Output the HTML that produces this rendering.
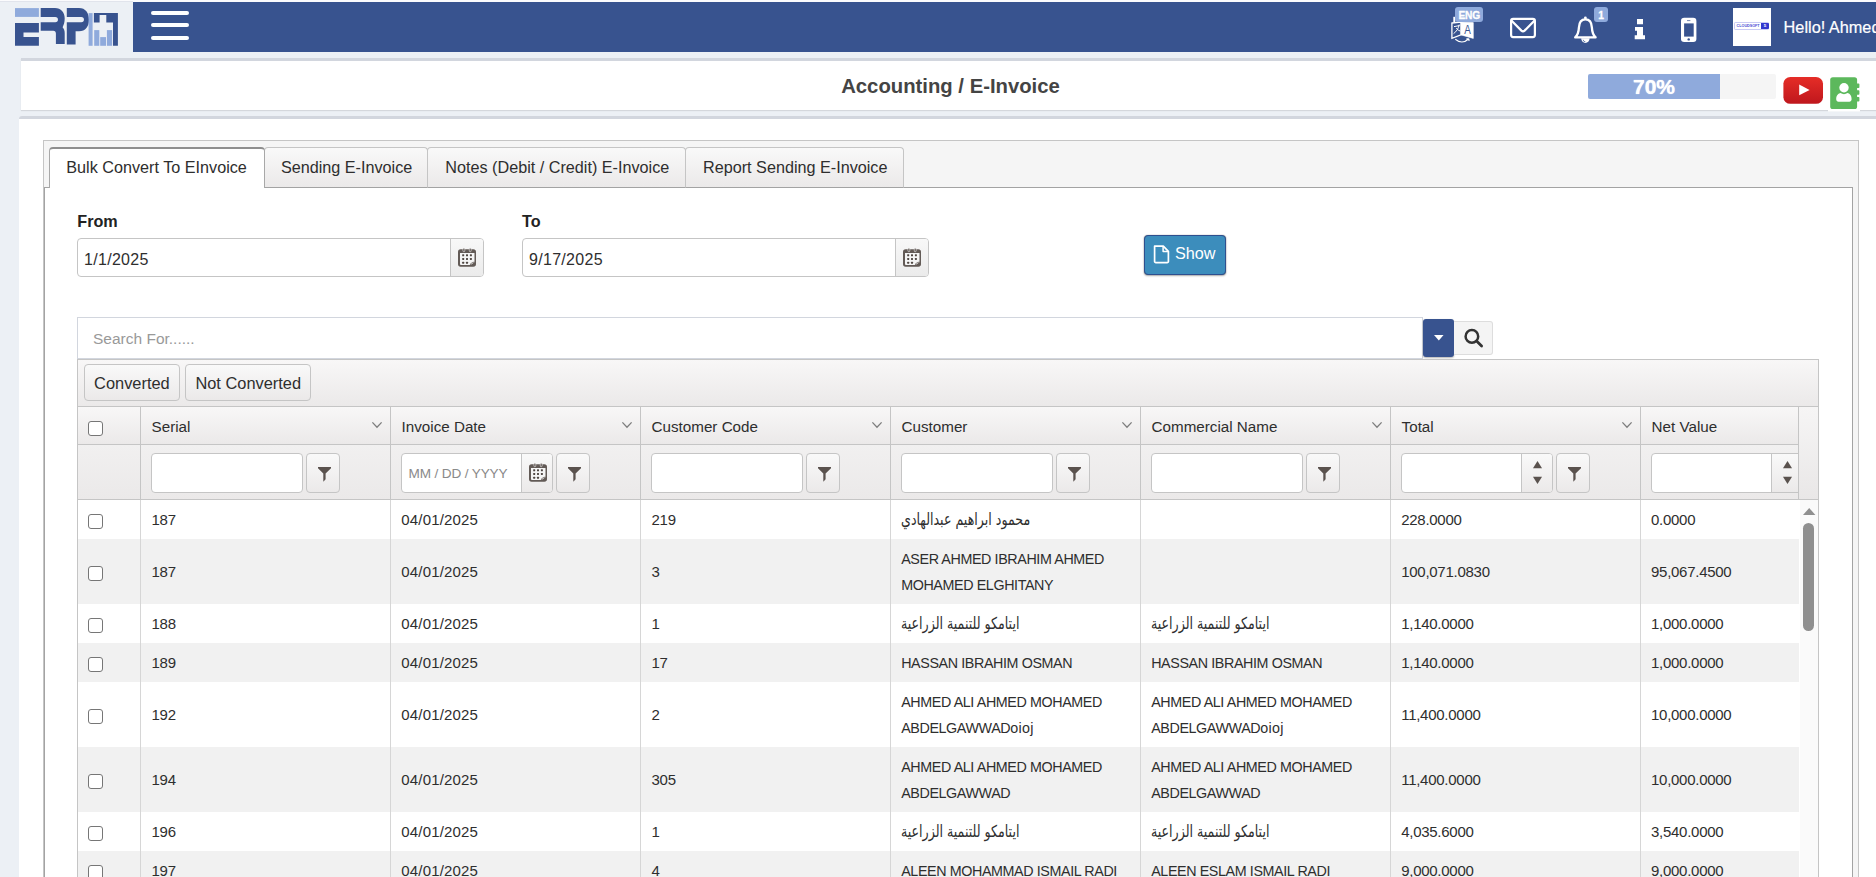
<!DOCTYPE html>
<html lang="en"><head><meta charset="utf-8"><title>Accounting / E-Invoice</title>
<style>
*{box-sizing:border-box}
html,body{margin:0;padding:0}
body{width:1876px;height:877px;overflow:hidden;background:#ecf0f5;font-family:"Liberation Sans","DejaVu Sans",sans-serif;color:#2e2e2e;position:relative;font-size:15px}
.a{position:absolute}
.t{position:absolute;white-space:nowrap;line-height:20px}
svg{position:absolute;overflow:visible}
/* navbar */
#topline{left:0;top:0;width:1876px;height:2px;background:#fbfbfd}
#topline2{left:0;top:1.2px;width:132.5px;height:.9px;background:#e1e4ec}
#nav{left:133px;top:2px;width:1743px;height:50px;background:#38538f}
.bar{left:151px;width:38px;height:4.3px;border-radius:2.2px;background:#fff}
.badge{background:#8faadc;color:#fff;font-weight:bold;border-radius:3px;text-align:center;height:15px;top:7px;font-size:10.2px;line-height:18.6px;letter-spacing:-.2px;-webkit-text-stroke:.3px #fff}
#hello{left:1783.6px;top:17.4px;color:#fff;font-size:16.3px;line-height:20px;-webkit-text-stroke:.2px #fff}
#avatar{left:1733px;top:8px;width:38px;height:38px;background:#fff}
/* boxes */
#titlebox{left:21px;top:58px;width:1860px;height:52px;background:#fff;border-top:3px solid #d2d6de;box-shadow:0 1px 1px rgba(0,0,0,.1);border-radius:0}
#title{left:841.2px;top:72.5px;font-weight:bold;font-size:20.3px;line-height:26px;color:#444}
#prog{left:1588px;top:74px;width:188px;height:25px;background:#f5f5f5;border-radius:2px;overflow:hidden}
#progfill{left:0;top:0;width:132px;height:25px;background:#8faadc}
#progtxt{left:1588px;top:74px;width:132px;text-align:center;color:#fff;font-weight:bold;font-size:21px;line-height:25px;text-shadow:0 0 1px #fff}
#mainbox{left:19px;top:116px;width:1870px;height:800px;background:#fff;border-top:3px solid #d2d6de;border-radius:3px}
/* tabs */
#tabwrap{left:43px;top:140px;width:1816px;height:760px;background:#f5f5f5;border:1px solid #c5c5c5}
#tabpanel{left:44px;top:187px;width:1809px;height:720px;background:#fff;border:1px solid #a3a3a3}
.tab{top:147px;height:41px;border:1px solid #c5c5c5;border-bottom-color:#a3a3a3;border-radius:4px 4px 0 0;background:linear-gradient(#f9f9f9,#ebe9e9);font-size:16.2px}
.tab span{position:absolute;left:16px;top:9px;line-height:20px;white-space:nowrap;color:#2e2e2e}
.tab.on{background:#fff;border-color:#a8a8a8;border-top:2px solid #8e8e8e;border-bottom:0;height:41px;z-index:2}
/* form */
.lbl{font-weight:bold;font-size:16.2px;color:#222}
.inp{height:39px;border:1px solid #c5c5c5;border-radius:4px;background:#fff;overflow:hidden}
.inp .btn{position:absolute;right:0;top:0;bottom:0;width:33px;border-left:1px solid #c5c5c5;background:linear-gradient(#f8f8f8,#ebebeb)}
.inp .v{position:absolute;left:6px;top:10.5px;font-size:16px;letter-spacing:.3px;line-height:20px;color:#2e2e2e}
#show{left:1144px;top:235px;width:82px;height:40px;background:#3c8dbc;border:1px solid #2e4f8f;border-radius:4px;box-shadow:0 0 1px rgba(0,0,0,.5),0 1px 2px rgba(0,0,0,.3)}
#show span{position:absolute;left:30px;top:7.2px;color:#fff;font-size:16.2px;line-height:20px}
/* search */
#search{left:77px;top:317px;width:1346px;height:42px;background:#fff;border:1px solid #d2d6de}
#search span{position:absolute;left:15px;top:10.8px;font-size:15.5px;line-height:20px;color:#999}
#dd{left:1423.2px;top:318.6px;width:31.2px;height:38.4px;background:#38538f;border-radius:3px;box-shadow:0 1px 2px rgba(0,0,0,.3)}
#sbtn{left:1454.4px;top:321px;width:38.3px;height:34px;background:#f4f4f4;border:1px solid #ddd;border-left:0;border-radius:0 3px 3px 0}
/* toolbar */
#toolbar{left:77px;top:359px;width:1742px;height:48px;border:1px solid #c5c5c5;background:linear-gradient(#f8f7f7,#ebe9e9)}
.kbtn{border:1px solid #c5c5c5;border-radius:4px;background:linear-gradient(#f9f9f9,#ebe9e9);font-size:16.4px}
.kbtn span{position:absolute;white-space:nowrap;line-height:20px}
/* grid */
#grid{left:77px;top:406px;width:1742px;height:500px;border:1px solid #c5c5c5;background:#fff}
#hdr{left:78px;top:407px;width:1740px;height:37px;background:linear-gradient(#f8f7f7,#ebe9e9)}
#flt{left:78px;top:445px;width:1740px;height:54px;background:linear-gradient(#f1f0f0,#ebe9e9)}
.hl{left:78px;width:1740px;height:1px;background:#c5c5c5}
.vl{top:407px;width:1px;height:93px;background:#c5c5c5}
.vb{top:500px;width:1px;height:400px;background:#d6d6d6}
.th{top:416.5px;font-size:15.2px;line-height:20px;color:#2e2e2e}
.row{left:78px;width:1721px}
.alt{background:#f1f1f1}
.c{position:absolute;white-space:nowrap;font-size:15px;line-height:26px;color:#2e2e2e}
.c.up{font-size:14.3px;letter-spacing:-.39px}
.c.n{letter-spacing:-.25px}
.c.num{letter-spacing:-.27px;margin-left:-.5px}
.c.dt{letter-spacing:.17px}
.c.ar{font-family:"DejaVu Sans Condensed","DejaVu Sans",sans-serif;font-size:16.5px;transform:scaleX(.85);transform-origin:0 50%}
.cb{width:15px;height:15px;border:1px solid #767676;border-radius:3px;background:#fff;left:88px}
.fin{top:453px;height:40px;border:1px solid #c5c5c5;border-radius:4px;background:#fff;overflow:hidden}
.fbtn{top:453px;width:34px;height:40px;border:1px solid #c5c5c5;border-radius:4px;background:linear-gradient(#f9f9f9,#ebe9e9)}
.spin{position:absolute;right:0;top:0;bottom:0;width:31px;border-left:1px solid #c5c5c5;background:linear-gradient(#f9f9f9,#ebe9e9)}
</style></head><body>
<div class="a" id="topline"></div><div class="a" id="topline2"></div>
<svg style="left:0;top:0" width="133" height="52" viewBox="0 0 133 52">
 <rect x="15" y="8.1" width="23.9" height="8.8" fill="#8faadc"/>
 <path d="M15 23.1H38.9V32.6H23.5V37.1H38.9V45.8H15Z" fill="#38538f"/>
 <path d="M40.7 8.1H55C61 8.1 64.7 12.5 64.7 18.5C64.7 22.5 63.6 25.3 62.6 27.2C63.9 28.8 64.7 30.5 64.7 33V44.1H55.9V33.5C55.9 31.8 55 30.7 53.3 30.7H40.7V22.2H55.3A2.65 2.65 0 0 0 55.3 16.9H40.7Z" fill="#38538f"/>
 <path d="M66.8 8.1H79C85.5 8.1 89 13 89 19.7C89 26.4 85.5 31.3 79 31.3H75.6V44.4H66.8V22.2H81.3A2.65 2.65 0 0 0 81.3 16.9H66.8Z" fill="#38538f"/>
 <rect x="88.6" y="13.1" width="4" height="32.7" fill="#8faadc"/>
 <rect x="94.2" y="30.1" width="5.1" height="15.7" fill="#8faadc"/>
 <rect x="100.2" y="37.1" width="5.8" height="8.7" fill="#8faadc"/>
 <rect x="106.9" y="30.1" width="5.2" height="15.7" fill="#8faadc"/>
 <path d="M93.9 13H117.9V45.8H113V22.5H106.3V14.9H99.6V22.5H93.9Z" fill="#38538f"/>
</svg>
<div class="a" id="nav"></div>
<div class="a bar" style="top:11px"></div>
<div class="a bar" style="top:23px"></div>
<div class="a bar" style="top:35.8px"></div>
<!-- nav icons -->
<svg style="left:0;top:0" width="1876" height="52" viewBox="0 0 1876 52" fill="none" stroke="#fff">
 <!-- language -->
 <path d="M1454.3 16.8V22.4" stroke-width="2"/>
 <path d="M1451.9 23L1461 22.2V34.9L1451.9 38.4Z" stroke-width="1.3"/>
 <path d="M1454 26.6L1459.6 25.6M1459.2 24.6C1458.6 28.4 1456.6 31.4 1453.6 33.6M1456.2 28.2C1457.4 29.6 1458.8 30.6 1460.4 31.2" stroke-width="1"/>
 <path d="M1461 21.9L1473.3 22.6V38.4L1461 34.9Z" fill="#fff" stroke-width=".6"/>
 <path d="M1455.3 39.3C1459.6 42.8 1464.6 42.6 1468.6 39M1468.9 38.7L1466.4 38.9M1468.9 38.7L1469 41.1" stroke-width="1.1"/>
 <!-- envelope -->
 <rect x="1511.1" y="18.9" width="23.8" height="18.2" rx="2" stroke-width="2.2"/>
 <path d="M1511.4 20.4L1521.4 30.6Q1523 32 1524.6 30.6L1534.6 20.4" stroke-width="2.2"/>
 <!-- bell -->
 <path d="M1585.4 19.4C1580.4 19.4 1579.1 23.4 1578.9 27.6C1578.7 32.4 1577.6 35 1575.2 37.4H1595.6C1593.2 35 1592.1 32.4 1591.9 27.6C1591.7 23.4 1590.4 19.4 1585.4 19.4Z" stroke-width="2.3" stroke-linejoin="round"/>
 <circle cx="1585.4" cy="17.9" r="1.4" fill="#fff" stroke="none"/>
 <path d="M1581.2 38.2A4.2 4.8 0 0 0 1589.6 38.2Z" fill="#fff" stroke="none"/>
 <path d="M1583.2 39.8A2.2 2.2 0 0 0 1585.4 41.8" stroke="#38538f" stroke-width=".7"/>
 <!-- info -->
 <path d="M1637 19.1H1643V24.3H1637ZM1635 27H1643V35.2H1645V39.3H1634.7V35.2H1637V30.7H1635Z" fill="#fff" stroke="none"/>
 <!-- mobile -->
 <rect x="1681" y="17.7" width="15.4" height="24.3" rx="3.2" fill="#fff" stroke="none"/>
 <rect x="1684.1" y="23.4" width="9.6" height="13.2" fill="#38538f" stroke="none"/>
 <circle cx="1688.7" cy="39.4" r="1.2" fill="#38538f" stroke="none"/>
 <path d="M1687 20.6H1690.4" stroke="#38538f" stroke-width=".7"/>
</svg>
<div class="a t" style="left:1463px;top:23.6px;width:9px;text-align:center;color:#38538f;font-size:12px;line-height:13px;transform:scaleX(.82)">A</div>
<div class="a badge" style="left:1455.4px;width:27.6px">ENG</div>
<div class="a badge" style="left:1593.8px;width:14.3px">1</div>
<div class="a" id="avatar">
 <div class="a" style="left:1.4px;top:14.2px;width:34.8px;height:7.4px;border:1px solid #c9cbf5;border-radius:1.2px"></div>
 <div class="a" style="left:28px;top:14.6px;width:7.9px;height:6.6px;background:#3238cf;border-radius:0 1px 1px 0"></div>
 <div class="t" style="left:3.6px;top:15.9px;font-size:3.7px;line-height:5px;font-weight:bold;color:#474cd4;letter-spacing:0">CLOUDSOFT</div>
 <div class="t" style="left:30.8px;top:15.2px;font-size:4.4px;line-height:5px;font-weight:bold;color:#fff">5</div>
</div>
<div class="a t" id="hello">Hello! Ahmed</div>
<!-- title box -->
<div class="a" id="titlebox"></div>
<div class="a t" id="title">Accounting / E-Invoice</div>
<div class="a" id="prog"><div class="a" id="progfill"></div></div>
<div class="a t" id="progtxt">70%</div>
<svg style="left:1783px;top:76px" width="80" height="38" viewBox="1783 76 80 38">
 <defs><linearGradient id="yt" x1="0" y1="0" x2="0" y2="1"><stop offset="0" stop-color="#e52d27"/><stop offset="1" stop-color="#bf171d"/></linearGradient></defs>
 <rect x="1783.4" y="77" width="39.6" height="26.8" rx="7" ry="6.5" fill="url(#yt)"/>
 <path d="M1799.2 84.5L1809.6 89.9L1799.2 95.3Z" fill="#fff"/>
 <rect x="1828" y="76" width="32" height="35.5" fill="#fff"/>
 <rect x="1830.2" y="77.2" width="26.9" height="31.8" rx="2.6" fill="#5cb85c"/>
 <path d="M1857 83.5h1.6a.8.8 0 0 1 .8.8v3a.8.8 0 0 1-.8.8h-1.6zM1857 90.2h1.6a.8.8 0 0 1 .8.8v3a.8.8 0 0 1-.8.8h-1.6zM1857 96.9h1.6a.8.8 0 0 1 .8.8v3a.8.8 0 0 1-.8.8h-1.6z" fill="#5cb85c"/>
 <circle cx="1844" cy="87.8" r="4.7" fill="#fff"/>
 <path d="M1836.2 99.3C1836.2 95.3 1838.6 93.3 1840.6 93.1C1842.4 94.6 1845.6 94.6 1847.4 93.1C1849.4 93.3 1851.6 95.3 1851.6 99.3C1851.6 100.9 1850.6 101.8 1849.4 101.8H1838.4C1837.2 101.8 1836.2 100.9 1836.2 99.3Z" fill="#fff"/>
</svg>
<div class="a" id="mainbox"></div>
<div class="a" id="tabwrap"></div>
<div class="a" id="tabpanel"></div>
<div class="a tab on" style="left:49px;width:216px"><span style="left:16.3px;top:8.3px">Bulk Convert To EInvoice</span></div>
<div class="a tab" style="left:264px;width:164px"><span style="left:15.9px">Sending E-Invoice</span></div>
<div class="a tab" style="left:427px;width:259px"><span style="left:17.3px">Notes (Debit / Credit) E-Invoice</span></div>
<div class="a tab" style="left:685px;width:219px"><span style="left:17px">Report Sending E-Invoice</span></div>
<!-- form -->
<div class="a t lbl" style="left:77.3px;top:211px">From</div>
<div class="a t lbl" style="left:522px;top:211px">To</div>
<div class="a inp" style="left:77px;top:238px;width:407px"><span class="v">1/1/2025</span><div class="btn">
<svg style="left:7px;top:9.2px" width="18" height="18.7" viewBox="0 0 18 18.7"><rect x="0" y="1.3" width="18" height="17.4" rx="2.6" fill="#625a56"/><path d="M2 4.9H16.5V14.3L12.5 16.9H2.9A.9 .9 0 0 1 2 16Z" fill="#f5f5f5"/><path d="M12.3 17C12.5 15.4 13.7 14.4 16.6 14.1" fill="none" stroke="#625a56" stroke-width=".8"/><rect x="4.9" y=".2" width="1.9" height="3.5" rx=".9" fill="#625a56" stroke="#efefef" stroke-width=".6"/><rect x="11.3" y=".2" width="1.9" height="3.5" rx=".9" fill="#625a56" stroke="#efefef" stroke-width=".6"/><g fill="#4e4642"><rect x="4.2" y="6.3" width="2" height="2" rx=".5"/><rect x="8" y="6.3" width="2" height="2" rx=".5"/><rect x="11.9" y="6.3" width="2" height="2" rx=".5"/><rect x="4.2" y="10" width="2" height="2" rx=".5"/><rect x="8" y="10" width="2" height="2" rx=".5"/><rect x="11.9" y="10" width="2" height="2" rx=".5"/><rect x="4.2" y="13.7" width="2" height="2" rx=".5"/><rect x="8" y="13.7" width="2" height="2" rx=".5"/></g></svg>
</div></div>
<div class="a inp" style="left:522px;top:238px;width:407px"><span class="v">9/17/2025</span><div class="btn">
<svg style="left:7px;top:9.2px" width="18" height="18.7" viewBox="0 0 18 18.7"><rect x="0" y="1.3" width="18" height="17.4" rx="2.6" fill="#625a56"/><path d="M2 4.9H16.5V14.3L12.5 16.9H2.9A.9 .9 0 0 1 2 16Z" fill="#f5f5f5"/><path d="M12.3 17C12.5 15.4 13.7 14.4 16.6 14.1" fill="none" stroke="#625a56" stroke-width=".8"/><rect x="4.9" y=".2" width="1.9" height="3.5" rx=".9" fill="#625a56" stroke="#efefef" stroke-width=".6"/><rect x="11.3" y=".2" width="1.9" height="3.5" rx=".9" fill="#625a56" stroke="#efefef" stroke-width=".6"/><g fill="#4e4642"><rect x="4.2" y="6.3" width="2" height="2" rx=".5"/><rect x="8" y="6.3" width="2" height="2" rx=".5"/><rect x="11.9" y="6.3" width="2" height="2" rx=".5"/><rect x="4.2" y="10" width="2" height="2" rx=".5"/><rect x="8" y="10" width="2" height="2" rx=".5"/><rect x="11.9" y="10" width="2" height="2" rx=".5"/><rect x="4.2" y="13.7" width="2" height="2" rx=".5"/><rect x="8" y="13.7" width="2" height="2" rx=".5"/></g></svg>
</div></div>
<div class="a" id="show">
<svg style="left:7.9px;top:9px" width="17" height="19" viewBox="0 0 17 19" fill="none" stroke="#fff" stroke-width="1.7" stroke-linejoin="round"><path d="M1.6 1.2H10.3L15.4 6.3V16.4A1.2 1.2 0 0 1 14.2 17.6H2.8A1.2 1.2 0 0 1 1.6 16.4Z"/><path d="M10.1 1.4V6.5H15.2" stroke-width="1.5"/></svg>
<span>Show</span></div>
<!-- search -->
<div class="a" id="search"><span>Search For......</span></div>
<div class="a" id="dd"><svg style="left:10.9px;top:16.1px" width="9.6" height="5.4" viewBox="0 0 9.6 5.4"><path d="M0 0H9.6L4.8 5.4Z" fill="#fff"/></svg></div>
<div class="a" id="sbtn"><svg style="left:8.4px;top:6.1px" width="20" height="20" viewBox="0 0 20 20" fill="none" stroke="#333" stroke-width="2.5"><circle cx="8.9" cy="8.4" r="6.3"/><path d="M13.6 13.1L18.6 18" stroke-linecap="round" stroke-width="2.8"/></svg></div>
<!-- toolbar -->
<div class="a" id="toolbar"></div>
<div class="a kbtn" style="left:84px;top:364px;width:96px;height:37px"><span style="left:9.1px;top:8.2px">Converted</span></div>
<div class="a kbtn" style="left:185px;top:364px;width:126px;height:37px"><span style="left:9.4px;top:8.2px">Not Converted</span></div>
<!-- grid -->
<div class="a" id="grid"></div>
<div class="a" id="hdr"></div>
<div class="a" id="flt"></div>
<div class="a hl" style="top:444px"></div>
<div class="a hl" style="top:499px"></div>
<div class="a row" style="top:500px;height:39px">
<div class="a cb" style="left:10px;top:14.0px"></div>
<span class="c n" style="left:73.5px;top:7.2px">187</span>
<span class="c dt" style="left:323.3px;top:7.2px">04/01/2025</span>
<span class="c n" style="left:573.5px;top:7.2px">219</span>
<span class="c ar" dir="rtl" style="left:823.2px;top:7.2px">محمود ابراهيم عبدالهادي</span>
<span class="c num" style="left:1323.7px;top:7.2px">228.0000</span>
<span class="c num" style="left:1573.5px;top:7.2px">0.0000</span>
</div>
<div class="a row alt" style="top:539px;height:65px">
<div class="a cb" style="left:10px;top:27.0px"></div>
<span class="c n" style="left:73.5px;top:20.2px">187</span>
<span class="c dt" style="left:323.3px;top:20.2px">04/01/2025</span>
<span class="c n" style="left:573.5px;top:20.2px">3</span>
<span class="c up" style="left:823.2px;top:7.2px">ASER AHMED IBRAHIM AHMED</span>
<span class="c up" style="left:823.2px;top:33.2px">MOHAMED ELGHITANY</span>
<span class="c num" style="left:1323.7px;top:20.2px">100,071.0830</span>
<span class="c num" style="left:1573.5px;top:20.2px">95,067.4500</span>
</div>
<div class="a row" style="top:604px;height:39px">
<div class="a cb" style="left:10px;top:14.0px"></div>
<span class="c n" style="left:73.5px;top:7.2px">188</span>
<span class="c dt" style="left:323.3px;top:7.2px">04/01/2025</span>
<span class="c n" style="left:573.5px;top:7.2px">1</span>
<span class="c ar" dir="rtl" style="left:823.2px;top:7.2px">ايتامكو للتنمية الزراعية</span>
<span class="c ar" dir="rtl" style="left:1073.2px;top:7.2px">ايتامكو للتنمية الزراعية</span>
<span class="c num" style="left:1323.7px;top:7.2px">1,140.0000</span>
<span class="c num" style="left:1573.5px;top:7.2px">1,000.0000</span>
</div>
<div class="a row alt" style="top:643px;height:39px">
<div class="a cb" style="left:10px;top:14.0px"></div>
<span class="c n" style="left:73.5px;top:7.2px">189</span>
<span class="c dt" style="left:323.3px;top:7.2px">04/01/2025</span>
<span class="c n" style="left:573.5px;top:7.2px">17</span>
<span class="c up" style="left:823.2px;top:7.2px">HASSAN IBRAHIM OSMAN</span>
<span class="c up" style="left:1073.2px;top:7.2px">HASSAN IBRAHIM OSMAN</span>
<span class="c num" style="left:1323.7px;top:7.2px">1,140.0000</span>
<span class="c num" style="left:1573.5px;top:7.2px">1,000.0000</span>
</div>
<div class="a row" style="top:682px;height:65px">
<div class="a cb" style="left:10px;top:27.0px"></div>
<span class="c n" style="left:73.5px;top:20.2px">192</span>
<span class="c dt" style="left:323.3px;top:20.2px">04/01/2025</span>
<span class="c n" style="left:573.5px;top:20.2px">2</span>
<span class="c up" style="left:823.2px;top:7.2px">AHMED ALI AHMED MOHAMED</span>
<span class="c up" style="left:823.2px;top:33.2px">ABDELGAWWAD<span style="letter-spacing:.35px">oioj</span></span>
<span class="c up" style="left:1073.2px;top:7.2px">AHMED ALI AHMED MOHAMED</span>
<span class="c up" style="left:1073.2px;top:33.2px">ABDELGAWWAD<span style="letter-spacing:.35px">oioj</span></span>
<span class="c num" style="left:1323.7px;top:20.2px">11,400.0000</span>
<span class="c num" style="left:1573.5px;top:20.2px">10,000.0000</span>
</div>
<div class="a row alt" style="top:747px;height:65px">
<div class="a cb" style="left:10px;top:27.0px"></div>
<span class="c n" style="left:73.5px;top:20.2px">194</span>
<span class="c dt" style="left:323.3px;top:20.2px">04/01/2025</span>
<span class="c n" style="left:573.5px;top:20.2px">305</span>
<span class="c up" style="left:823.2px;top:7.2px">AHMED ALI AHMED MOHAMED</span>
<span class="c up" style="left:823.2px;top:33.2px">ABDELGAWWAD</span>
<span class="c up" style="left:1073.2px;top:7.2px">AHMED ALI AHMED MOHAMED</span>
<span class="c up" style="left:1073.2px;top:33.2px">ABDELGAWWAD</span>
<span class="c num" style="left:1323.7px;top:20.2px">11,400.0000</span>
<span class="c num" style="left:1573.5px;top:20.2px">10,000.0000</span>
</div>
<div class="a row" style="top:812px;height:39px">
<div class="a cb" style="left:10px;top:14.0px"></div>
<span class="c n" style="left:73.5px;top:7.2px">196</span>
<span class="c dt" style="left:323.3px;top:7.2px">04/01/2025</span>
<span class="c n" style="left:573.5px;top:7.2px">1</span>
<span class="c ar" dir="rtl" style="left:823.2px;top:7.2px">ايتامكو للتنمية الزراعية</span>
<span class="c ar" dir="rtl" style="left:1073.2px;top:7.2px">ايتامكو للتنمية الزراعية</span>
<span class="c num" style="left:1323.7px;top:7.2px">4,035.6000</span>
<span class="c num" style="left:1573.5px;top:7.2px">3,540.0000</span>
</div>
<div class="a row alt" style="top:851px;height:39px">
<div class="a cb" style="left:10px;top:14.0px"></div>
<span class="c n" style="left:73.5px;top:7.2px">197</span>
<span class="c dt" style="left:323.3px;top:7.2px">04/01/2025</span>
<span class="c n" style="left:573.5px;top:7.2px">4</span>
<span class="c up" style="left:823.2px;top:7.2px">ALEEN MOHAMMAD ISMAIL RADI</span>
<span class="c up" style="left:1073.2px;top:7.2px">ALEEN ESLAM ISMAIL RADI</span>
<span class="c num" style="left:1323.7px;top:7.2px">9,000.0000</span>
<span class="c num" style="left:1573.5px;top:7.2px">9,000.0000</span>
</div>
<div class="a vl" style="left:140px"></div>
<div class="a vb" style="left:140px"></div>
<div class="a vl" style="left:390px"></div>
<div class="a vb" style="left:390px"></div>
<div class="a vl" style="left:640px"></div>
<div class="a vb" style="left:640px"></div>
<div class="a vl" style="left:890px"></div>
<div class="a vb" style="left:890px"></div>
<div class="a vl" style="left:1140px"></div>
<div class="a vb" style="left:1140px"></div>
<div class="a vl" style="left:1390px"></div>
<div class="a vb" style="left:1390px"></div>
<div class="a vl" style="left:1640px"></div>
<div class="a vb" style="left:1640px"></div>
<div class="a vl" style="left:1798px"></div>
<div class="a cb" style="top:421px"></div>
<div class="a t th" style="left:151.6px">Serial</div>
<svg style="left:372px;top:422px" width="10" height="6" viewBox="0 0 10 6"><path d="M.4 .4L5 5.2L9.6 .4" fill="none" stroke="#7d7d7d" stroke-width="1.3"/></svg>
<div class="a t th" style="left:401.6px">Invoice Date</div>
<svg style="left:622px;top:422px" width="10" height="6" viewBox="0 0 10 6"><path d="M.4 .4L5 5.2L9.6 .4" fill="none" stroke="#7d7d7d" stroke-width="1.3"/></svg>
<div class="a t th" style="left:651.6px">Customer Code</div>
<svg style="left:872px;top:422px" width="10" height="6" viewBox="0 0 10 6"><path d="M.4 .4L5 5.2L9.6 .4" fill="none" stroke="#7d7d7d" stroke-width="1.3"/></svg>
<div class="a t th" style="left:901.6px">Customer</div>
<svg style="left:1122px;top:422px" width="10" height="6" viewBox="0 0 10 6"><path d="M.4 .4L5 5.2L9.6 .4" fill="none" stroke="#7d7d7d" stroke-width="1.3"/></svg>
<div class="a t th" style="left:1151.6px">Commercial Name</div>
<svg style="left:1372px;top:422px" width="10" height="6" viewBox="0 0 10 6"><path d="M.4 .4L5 5.2L9.6 .4" fill="none" stroke="#7d7d7d" stroke-width="1.3"/></svg>
<div class="a t th" style="left:1401.6px">Total</div>
<svg style="left:1622px;top:422px" width="10" height="6" viewBox="0 0 10 6"><path d="M.4 .4L5 5.2L9.6 .4" fill="none" stroke="#7d7d7d" stroke-width="1.3"/></svg>
<div class="a t th" style="left:1651.6px">Net Value</div>
<div class="a fin" style="left:151px;width:152px"></div>
<div class="a fbtn" style="left:306px"><svg style="left:10.5px;top:13px" width="13" height="15" viewBox="0 0 13 15"><path d="M0 0H13V1.2L7.6 6.6V12.2L5.6 14.6H5.3V6.6L0 1.2Z" fill="#5a524e"/></svg></div>
<div class="a fin" style="left:401px;width:152px"><span class="t" style="left:6.6px;top:10.4px;font-size:13.6px;color:#8a8a8a;letter-spacing:-.15px">MM / DD / YYYY</span><div class="spin" style="width:31px"><svg style="left:6.5px;top:9.2px" width="18" height="18.7" viewBox="0 0 18 18.7"><rect x="0" y="1.3" width="18" height="17.4" rx="2.6" fill="#625a56"/><path d="M2 4.9H16.5V14.3L12.5 16.9H2.9A.9 .9 0 0 1 2 16Z" fill="#f5f5f5"/><path d="M12.3 17C12.5 15.4 13.7 14.4 16.6 14.1" fill="none" stroke="#625a56" stroke-width=".8"/><rect x="4.9" y=".2" width="1.9" height="3.5" rx=".9" fill="#625a56" stroke="#efefef" stroke-width=".6"/><rect x="11.3" y=".2" width="1.9" height="3.5" rx=".9" fill="#625a56" stroke="#efefef" stroke-width=".6"/><g fill="#4e4642"><rect x="4.2" y="6.3" width="2" height="2" rx=".5"/><rect x="8" y="6.3" width="2" height="2" rx=".5"/><rect x="11.9" y="6.3" width="2" height="2" rx=".5"/><rect x="4.2" y="10" width="2" height="2" rx=".5"/><rect x="8" y="10" width="2" height="2" rx=".5"/><rect x="11.9" y="10" width="2" height="2" rx=".5"/><rect x="4.2" y="13.7" width="2" height="2" rx=".5"/><rect x="8" y="13.7" width="2" height="2" rx=".5"/></g></svg></div></div>
<div class="a fbtn" style="left:556px"><svg style="left:10.5px;top:13px" width="13" height="15" viewBox="0 0 13 15"><path d="M0 0H13V1.2L7.6 6.6V12.2L5.6 14.6H5.3V6.6L0 1.2Z" fill="#5a524e"/></svg></div>
<div class="a fin" style="left:651px;width:152px"></div>
<div class="a fbtn" style="left:806px"><svg style="left:10.5px;top:13px" width="13" height="15" viewBox="0 0 13 15"><path d="M0 0H13V1.2L7.6 6.6V12.2L5.6 14.6H5.3V6.6L0 1.2Z" fill="#5a524e"/></svg></div>
<div class="a fin" style="left:901px;width:152px"></div>
<div class="a fbtn" style="left:1056px"><svg style="left:10.5px;top:13px" width="13" height="15" viewBox="0 0 13 15"><path d="M0 0H13V1.2L7.6 6.6V12.2L5.6 14.6H5.3V6.6L0 1.2Z" fill="#5a524e"/></svg></div>
<div class="a fin" style="left:1151px;width:152px"></div>
<div class="a fbtn" style="left:1306px"><svg style="left:10.5px;top:13px" width="13" height="15" viewBox="0 0 13 15"><path d="M0 0H13V1.2L7.6 6.6V12.2L5.6 14.6H5.3V6.6L0 1.2Z" fill="#5a524e"/></svg></div>
<div class="a fin" style="left:1401px;width:152px"><div class="spin"><svg style="left:11px;top:7px" width="9" height="24" viewBox="0 0 9 24"><path d="M4.5 0L9 7.2H0Z" fill="#5a524e"/><path d="M0 15.8H9L4.5 23Z" fill="#5a524e"/></svg></div></div>
<div class="a fbtn" style="left:1556px"><svg style="left:10.5px;top:13px" width="13" height="15" viewBox="0 0 13 15"><path d="M0 0H13V1.2L7.6 6.6V12.2L5.6 14.6H5.3V6.6L0 1.2Z" fill="#5a524e"/></svg></div>
<div class="a fin" style="left:1651px;width:152px"><div class="spin"><svg style="left:11px;top:7px" width="9" height="24" viewBox="0 0 9 24"><path d="M4.5 0L9 7.2H0Z" fill="#5a524e"/><path d="M0 15.8H9L4.5 23Z" fill="#5a524e"/></svg></div></div>
<div class="a" style="left:1799px;top:407px;width:19px;height:92px;background:linear-gradient(#f6f5f5,#e9e7e7)"></div>
<div class="a" style="left:1798px;top:407px;width:1px;height:93px;background:#c5c5c5"></div>
<div class="a" style="left:1800px;top:500px;width:18px;height:400px;background:#fafafa"></div>
<svg style="left:1802.6px;top:508px" width="12.4" height="7" viewBox="0 0 12.4 7"><path d="M0 7L6.2 0L12.4 7Z" fill="#8f8f8f"/></svg>
<div class="a" style="left:1803px;top:523px;width:11px;height:108px;border-radius:5.5px;background:#8f8f8f"></div>
</body></html>
